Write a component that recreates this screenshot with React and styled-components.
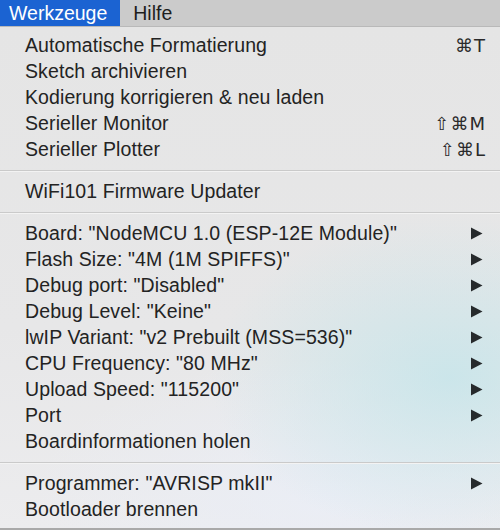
import React from "react";
import styled, { createGlobalStyle } from "styled-components";

const GlobalStyle = createGlobalStyle`
  html, body {
    margin: 0;
    padding: 0;
    background: #e4e4e4;
  }
  body {
    font-family: "Liberation Sans", Arial, sans-serif;
  }
`

const Screen = styled.div`
  width: 500px;
  height: 530px;
  overflow: hidden;
  display: flex;
  flex-direction: column;
`

const MenuBar = styled.div`
  height: 27px;
  display: flex;
  align-items: stretch;
  background: #cbcbcb;
  border-bottom: 1px solid #b9b9b9;
  box-sizing: border-box;
`

const BarItem = styled.div`
  display: flex;
  align-items: center;
  padding: 0 13px 0 ${p => (p.active ? "9px" : "13px")};
  font-size: 19.5px;
  color: ${p => (p.active ? "#ffffff" : "#1e1e1e")};
  background: ${p => (p.active ? "#1b63d2" : "transparent")};
`

const Menu = styled.div`
  flex: 1;
  padding: 5px 0 4px;
  background:
    radial-gradient(ellipse 240px 160px at 450px 350px, rgba(198, 229, 234, 0.85), rgba(214, 232, 238, 0) 100%),
    radial-gradient(ellipse 300px 140px at 330px 470px, rgba(234, 238, 247, 0.8), rgba(232, 236, 246, 0) 100%),
    linear-gradient(180deg, #e5e5e5 0%, #e7e7e8 60%, #ececee 100%);
  border-bottom: 2px solid #a9a9a9;
  box-sizing: border-box;
`

const Row = styled.div`
  height: 26px;
  display: flex;
  align-items: center;
  padding: 0 17px 0 25px;
  font-size: 19.5px;
  letter-spacing: 0.1px;
  color: #232323;
  white-space: nowrap;
`

const Label = styled.span`
  flex: 1;
`

const Shortcut = styled.span`
  font-family: "DejaVu Sans", "Liberation Sans", sans-serif;
  font-size: 18px;
  color: #2a2a2a;
  letter-spacing: 1px;
  margin-right: -3px;
`

const Separator = styled.div`
  height: 16px;
  display: flex;
  align-items: center;

  &::after {
    content: "";
    flex: 1;
    height: 1px;
    background: #cacaca;
    box-shadow: 0 1px 0 #f3f3f3;
  }
`

const Arrow = () => (
  <svg width="13" height="13" viewBox="0 0 13 13">
    <path d="M1 0.5 L12.5 6.5 L1 12.5 Z" fill="#262a2c" />
  </svg>
)

const groups = [
  [
    { label: "Automatische Formatierung", key: "⌘T" },
    { label: "Sketch archivieren" },
    { label: "Kodierung korrigieren & neu laden" },
    { label: "Serieller Monitor", key: "⇧⌘M" },
    { label: "Serieller Plotter", key: "⇧⌘L" },
  ],
  [{ label: "WiFi101 Firmware Updater" }],
  [
    { label: 'Board: "NodeMCU 1.0 (ESP-12E Module)"', sub: true },
    { label: 'Flash Size: "4M (1M SPIFFS)"', sub: true },
    { label: 'Debug port: "Disabled"', sub: true },
    { label: 'Debug Level: "Keine"', sub: true },
    { label: 'lwIP Variant: "v2 Prebuilt (MSS=536)"', sub: true },
    { label: 'CPU Frequency: "80 MHz"', sub: true },
    { label: 'Upload Speed: "115200"', sub: true },
    { label: "Port", sub: true },
    { label: "Boardinformationen holen" },
  ],
  [
    { label: 'Programmer: "AVRISP mkII"', sub: true },
    { label: "Bootloader brennen" },
  ],
]

class App extends React.Component {
  render() {
    return <Screen>
      <GlobalStyle />
      <MenuBar>
        <BarItem active>Werkzeuge</BarItem>
        <BarItem>Hilfe</BarItem>
      </MenuBar>
      <Menu>
        {groups.map((items, gi) => (
          <React.Fragment key={gi}>
            {gi > 0 && <Separator />}
            {items.map(item => (
              <Row key={item.label}>
                <Label>{item.label}</Label>
                {item.key && <Shortcut>{item.key}</Shortcut>}
                {item.sub && <Arrow />}
              </Row>
            ))}
          </React.Fragment>
        ))}
      </Menu>
    </Screen>
  }
}

export default App
